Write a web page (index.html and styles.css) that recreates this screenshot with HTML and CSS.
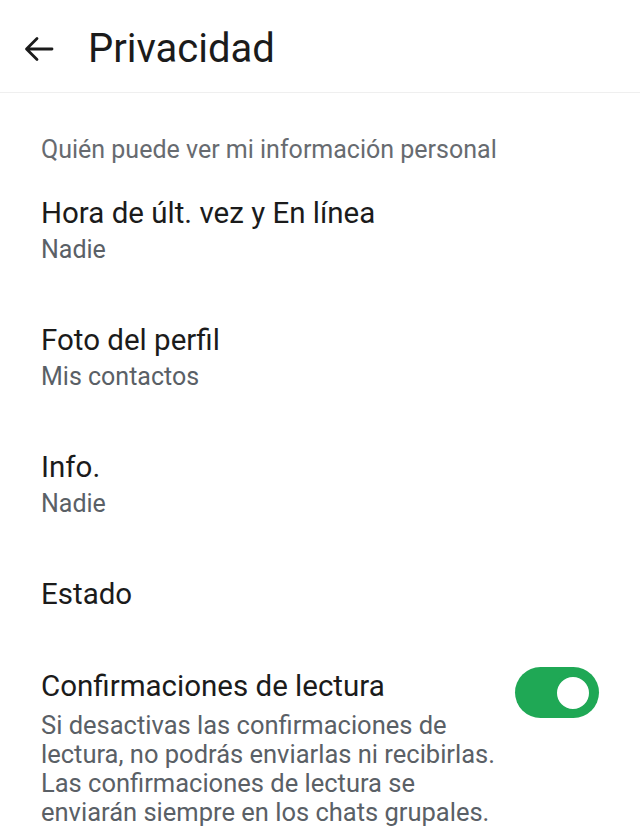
FILE: index.html
```html
<!DOCTYPE html>
<html lang="es">
<head>
  <meta charset="UTF-8"/>
  <title>Privacidad</title>
  <link rel="stylesheet" href="styles.css">
</head>
<body>
  <header class="topbar">
    <svg class="back" width="30" height="26" viewBox="0 0 30 26">
      <path d="M28 13H3.5M13 2.5L2.5 13L13 23.5" fill="none" stroke="#1b1b1b" stroke-width="2.8" stroke-linecap="round" stroke-linejoin="round"/>
    </svg>
    <h1>Privacidad</h1>
  </header>

  <div class="section">Quién puede ver mi información personal</div>

  <div class="item">
    <div class="title">Hora de últ. vez y En línea</div>
    <div class="sub">Nadie</div>
  </div>
  <div class="item">
    <div class="title">Foto del perfil</div>
    <div class="sub">Mis contactos</div>
  </div>
  <div class="item">
    <div class="title">Info.</div>
    <div class="sub">Nadie</div>
  </div>
  <div class="item">
    <div class="title">Estado</div>
  </div>
  <div class="item row">
    <div class="text">
      <div class="title">Confirmaciones de lectura</div>
      <div class="desc">Si desactivas las confirmaciones de lectura, no podrás enviarlas ni recibirlas. Las confirmaciones de lectura se enviarán siempre en los chats grupales.</div>
    </div>
    <div class="toggle"><span class="knob"></span></div>
  </div>
</body>
</html>
```

FILE: styles.css
```css
body { margin:0; background:#fff; font-family:Roboto,"Noto Sans",sans-serif; color:#1b1b1b; }
.topbar { height:93px; display:flex; align-items:center; padding:5px 0 0 24px; box-sizing:border-box; border-bottom:1px solid #efefef; }
.back { display:block; }
.topbar h1 { margin:0 0 0 34px; font-size:40px; font-weight:400; color:#1b1b1b; }
.section { margin:42px 41px 0; font-size:25px; line-height:30px; color:#676b70; }
.item { padding:30px 41px 26px; }
.title { font-size:29.5px; line-height:36px; color:#1b1b1b; }
.sub { font-size:25px; line-height:32px; margin-top:3px; color:#5a6066; }
.row { display:flex; align-items:flex-start; justify-content:space-between; padding-bottom:0; }
.text { width:462px; }
.desc { font-size:25.5px; line-height:29px; color:#5a6066; margin-top:7px; }
.toggle { width:84px; height:51px; margin-top:-1px; border-radius:26px; background:#1fa855; position:relative; flex-shrink:0; }
.knob { position:absolute; right:6px; top:5.5px; width:32px; height:32px; border-radius:50%; background:#fff; border:4px solid #1fa855; }
```
